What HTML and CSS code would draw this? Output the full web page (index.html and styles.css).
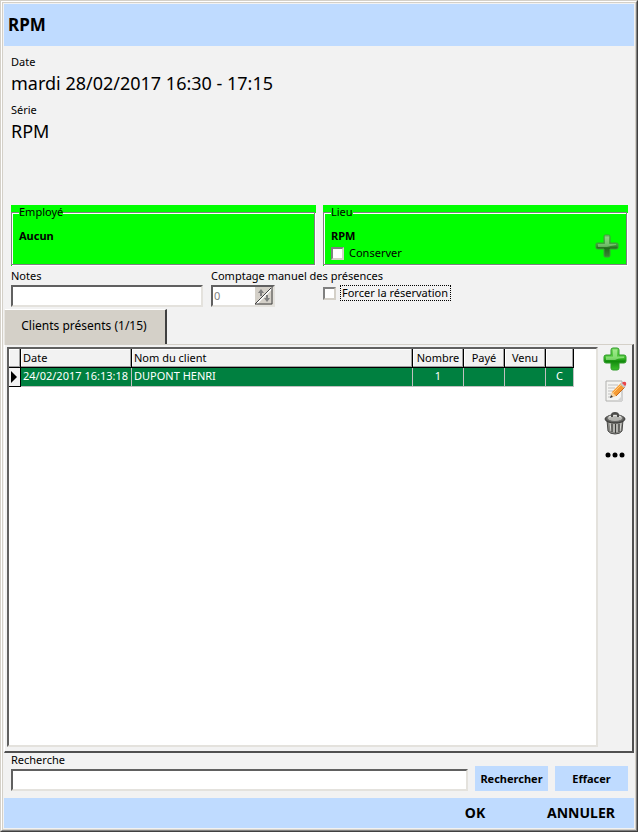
FILE: index.html
```html
<!DOCTYPE html>
<html lang="fr">
<head>
    <meta charset="UTF-8">
    <meta name="viewport" content="width=device-width, initial-scale=1.0">
    <title>RPM</title>
    <link rel="stylesheet" href="styles.css">
</head>
<body>
    <div class="window">
        <div class="window_inner">
            <h1 class="title">RPM</h1>

            <div class="infos">
                <div class="info_label">Date</div>
                <div class="info_value">mardi 28/02/2017 16:30 - 17:15</div>
                <div class="info_label">Série</div>
                <div class="info_value">RPM</div>
            </div>

            <div class="groups">
                <div class="group">
                    <fieldset class="group_box">
                        <legend>Employé</legend>
                        <div class="group_value">Aucun</div>
                    </fieldset>
                </div>
                <div class="group">
                    <fieldset class="group_box">
                        <legend>Lieu</legend>
                        <div class="group_value">RPM</div>
                        <label class="check"><input type="checkbox" name="conserver"><span>Conserver</span></label>
                        <button class="icon_button group_add" type="button" aria-label="Ajouter un lieu">
                            <svg width="24" height="24" viewBox="0 0 24 24">
                                <defs>
                                    <linearGradient id="olive" x1="0" y1="0" x2="0" y2="1">
                                        <stop offset="0" stop-color="#7fc878"/>
                                        <stop offset="0.45" stop-color="#45a040"/>
                                        <stop offset="0.6" stop-color="#1f6a1a"/>
                                        <stop offset="1" stop-color="#3a8a34"/>
                                    </linearGradient>
                                </defs>
                                <path d="M10 1H14Q15 1 15 3V9H21Q23 9 23 10V14Q23 15 21 15H15V21Q15 23 14 23H10Q9 23 9 21V15H3Q1 15 1 14V10Q1 9 3 9H9V3Q9 1 10 1Z" fill="url(#olive)" stroke="#3f9a3a"/>
                                <path d="M10 3H14V10H21V11Q15 12 12 13H3V10H10Z" fill="#b4f0a8" opacity="0.4"/>
                            </svg>
                        </button>
                    </fieldset>
                </div>
            </div>

            <div class="fields">
                <div class="fields_left">
                    <div class="notes">
                        <label class="field_label" for="notes">Notes</label>
                        <input class="text_input" type="text" id="notes">
                    </div>
                    <div class="count">
                        <label class="field_label" for="count">Comptage manuel des présences</label>
                        <div class="spinner">
                            <input type="number" id="count" value="0" disabled>
                            <button type="button" disabled aria-label="Modifier le comptage">
                                <svg width="18" height="18" viewBox="0 0 18 18">
                                    <path d="M1 17 17 1" stroke="#fff" stroke-width="2"/>
                                    <path d="M0 17 16 1" stroke="#404040"/>
                                    <path d="M17 0V17H0" fill="none" stroke="#404040"/>
                                    <path d="M6 2 9 6H7V9H5V6H3ZM12 15 9 11H11V8H13V11H15Z" fill="#808080"/>
                                </svg>
                            </button>
                        </div>
                    </div>
                </div>
                <div class="fields_right">
                    <label class="check check_focus"><input type="checkbox" name="forcer"><span>Forcer la réservation</span></label>
                </div>
            </div>

            <div class="tabs">
                <button class="tab" type="button">Clients présents (1/15)</button>
            </div>
            <div class="panel">
                <div class="list">
                    <table class="clients">
                        <colgroup>
                            <col class="col_mark">
                            <col class="col_date">
                            <col>
                            <col class="col_number">
                            <col class="col_flag">
                            <col class="col_flag">
                            <col class="col_type">
                        </colgroup>
                        <thead>
                            <tr>
                                <th></th>
                                <th>Date</th>
                                <th>Nom du client</th>
                                <th class="center">Nombre</th>
                                <th class="center">Payé</th>
                                <th class="center">Venu</th>
                                <th></th>
                            </tr>
                        </thead>
                        <tbody>
                            <tr>
                                <td class="mark"><svg width="6" height="12" viewBox="0 0 6 12"><path d="M0 0 6 6 0 12Z"/></svg></td>
                                <td>24/02/2017 16:13:18</td>
                                <td>DUPONT HENRI</td>
                                <td class="center">1</td>
                                <td></td>
                                <td></td>
                                <td class="center">C</td>
                            </tr>
                        </tbody>
                    </table>
                </div>
                <div class="tools">
                    <button class="icon_button" type="button" aria-label="Ajouter">
                        <svg width="24" height="24" viewBox="0 0 24 24">
                            <defs>
                                <linearGradient id="green" x1="0" y1="0" x2="0" y2="1">
                                    <stop offset="0" stop-color="#7ddc68"/>
                                    <stop offset="0.45" stop-color="#3fc02c"/>
                                    <stop offset="0.6" stop-color="#128a0c"/>
                                    <stop offset="1" stop-color="#3cc02c"/>
                                </linearGradient>
                            </defs>
                            <path d="M10 1H14Q16 1 16 3V8H21Q23 8 23 10V14Q23 16 21 16H16V21Q16 23 14 23H10Q8 23 8 21V16H3Q1 16 1 14V10Q1 8 3 8H8V3Q8 1 10 1Z" fill="url(#green)" stroke="#2f9a28"/>
                            <path d="M10 2.500H14V9.500H21V11Q15 11 12 13H3V9.500H10Z" fill="#d4ffc4" opacity="0.450"/>
                        </svg>
                    </button>
                    <button class="icon_button" type="button" aria-label="Modifier">
                        <svg width="24" height="24" viewBox="0 0 24 24">
                            <path d="M3 2H19V22H3Z" fill="#f4f4f2" stroke="#b0b0ae"/>
                            <path d="M14 22 19 17V22Z" fill="#d4d4d4"/>
                            <path d="M5 6H15M5 9H12M5 12H10M5 15H8M5 18H8" stroke="#c0c0c0"/>
                            <path d="M8 18 9 13 18 4 22 8 13 17Z" fill="#f59a32"/>
                            <path d="M13 17 22 8" stroke="#c4681c"/>
                            <path d="M10 14 19 5" stroke="#ffc878"/>
                            <path d="M8 18 9 13 13 17Z" fill="#f2d3a5"/>
                            <path d="M7 19 8 16 10 18Z" fill="#333"/>
                            <path d="M17 5 19 3 23 7 21 9Z" fill="#c8c8c8"/>
                            <path d="M19 4 20 3Q24 2 23 6L22 7Z" fill="#e9444a"/>
                        </svg>
                    </button>
                    <button class="icon_button" type="button" aria-label="Supprimer">
                        <svg width="24" height="24" viewBox="0 0 24 24">
                            <path d="M4 9H20L19 20Q17 23 12 23T5 20Z" fill="#8a8a86" stroke="#4a4a48"/>
                            <path d="M7 12 8 20M11 13V21M14 13V21M18 12 17 20" stroke="#dcdcd8"/>
                            <path d="M9 13V21M12.500 13V22M16 13V21" stroke="#3c3c3a"/>
                            <ellipse cx="12" cy="8" rx="10" ry="4" fill="#5a5a58" stroke="#3a3a38"/>
                            <ellipse cx="12" cy="7" rx="8" ry="3.500" fill="#b4b4b0" stroke="#686866"/>
                            <path d="M6 6Q12 3 18 6" fill="none" stroke="#ececea"/>
                            <path d="M9 6V4Q9 2 12 2T15 4V6" fill="none" stroke="#4a4a48" stroke-width="2"/>
                        </svg>
                    </button>
                    <button class="icon_button" type="button" aria-label="Plus">
                        <svg width="24" height="24" viewBox="0 0 24 24">
                            <circle cx="5" cy="12" r="2.500"/>
                            <circle cx="12" cy="12" r="2.500"/>
                            <circle cx="19" cy="12" r="2.500"/>
                        </svg>
                    </button>
                </div>
            </div>

            <form class="search">
                <div class="search_field">
                    <label class="field_label" for="search">Recherche</label>
                    <input class="text_input" type="text" id="search">
                </div>
                <button class="search_button" type="button">Rechercher</button>
                <button class="search_button" type="reset">Effacer</button>
            </form>

            <div class="footer">
                <button class="footer_button" type="button">OK</button>
                <button class="footer_button" type="button">ANNULER</button>
            </div>
        </div>
    </div>
</body>
</html>
```

FILE: styles.css
```css
*{
    box-sizing: border-box;
}
body{
    margin: 0px;
    font-family: "Noto Sans", "Open Sans", sans-serif;
    font-size: 11px;
    line-height: 14px;
    color: black;
}
button, input{
    font: inherit;
    color: inherit;
    margin: 0px;
}
.window{
    display: flex;
    min-height: 100vh;
    background-color: #f2f2f2;
    border: 1px solid;
    border-color: #d4d0c8 #404040 #404040 #d4d0c8;
}
.window_inner{
    display: flex;
    flex-direction: column;
    flex: 1;
    min-width: 0px;
    border: 1px solid;
    border-color: white #808080 #808080 white;
    outline: 1px solid #d4d0c8;
    outline-offset: -2px;
    padding: 2px;
}
.title{
    margin: 0px;
    height: 42px;
    padding-left: 4px;
    background-color: #bfdbff;
    font-size: 17px;
    line-height: 42px;
    font-weight: 700;
}
.infos{
    height: 159px;
    padding: 9px 7px;
}
.info_label{
    height: 16px;
}
.info_value{
    height: 32px;
    font-size: 18px;
    line-height: 24px;
}

/* green boxes */
.groups{
    display: flex;
    gap: 7px;
    padding: 0px 6px 0px 7px;
}
.group{
    flex: 1;
    height: 61px;
    background-color: #00ff00;
}
.group_box{
    position: relative;
    height: 60px;
    margin: 0px 1px 0px 0px;
    padding: 10px 7px 0px;
    border: 1px solid #808080;
    box-shadow: inset 1px 1px white, 1px 1px white;
}
.group_box legend{
    padding: 0px;
    background-color: #00ff00;
}
.group_value{
    font-weight: 700;
    margin-bottom: 3px;
}
.group_add{
    position: absolute;
    right: 7px;
    bottom: 6px;
}
.icon_button{
    display: block;
    width: 24px;
    height: 24px;
    padding: 0px;
    border: none;
    background: none;
    cursor: pointer;
}
.icon_button svg{
    display: block;
}
.check{
    display: flex;
    align-items: center;
    gap: 5px;
}
.check input{
    appearance: none;
    width: 13px;
    height: 13px;
    background-color: white;
    border: 2px solid;
    border-color: #808080 #d4d0c8 #d4d0c8 #808080;
}
.check_focus{
    gap: 4px;
}
.check_focus span{
    padding: 0px 2px 0px 1px;
    border: 1px dotted black;
}

.fields{
    display: flex;
    gap: 7px;
    padding: 3px 6px 0px 7px;
}
.fields_left, .fields_right{
    flex: 1;
    min-width: 0px;
}
.fields_left{
    display: flex;
    gap: 8px;
}
.fields_right{
    padding-top: 16px;
}
.notes{
    flex: 1;
}
.count{
    width: 105px;
}
.field_label{
    display: block;
    height: 16px;
    white-space: nowrap;
}
.text_input, .spinner{
    display: block;
    width: 100%;
    height: 22px;
    padding: 0px 2px;
    background-color: white;
    border: 2px solid;
    border-color: #606060 #e4e2dd #e4e2dd #606060;
    outline: none;
}
.spinner{
    display: flex;
    width: 64px;
    padding: 0px;
}
.spinner input{
    flex: 1;
    min-width: 0px;
    padding: 0px 1px;
    border: none;
    background: none;
    color: #808080;
    appearance: textfield;
}
.spinner button{
    width: 18px;
    padding: 0px;
    border: none;
    background-color: #d4d0c8;
}
.spinner svg{
    display: block;
}

.tabs{
    display: flex;
    height: 35px;
    margin-top: 2px;
}
.tab{
    width: 163px;
    padding: 0px 2px 2px 0px;
    border: 1px solid;
    border-width: 1px 2px 0px 1px;
    border-color: white #404040 white #e8e6e1;
    background-color: #d4d0c8;
    font-size: 12px;
}
.panel{
    display: flex;
    flex: 1;
    border: 1px solid;
    border-width: 1px 2px 2px 1px;
    border-color: #d4d0c8 #505050 #505050 white;
    padding: 2px 5px 4px 2px;
}
.list{
    flex: 1;
    background-color: white;
    border: 2px solid;
    border-color: #606060 #e4e2dd #e4e2dd #606060;
}
.tools{
    display: flex;
    flex-direction: column;
    gap: 8px;
    margin-left: 5px;
}
.clients{
    width: calc(100% - 22px);
    table-layout: fixed;
    border-collapse: separate;
    border-spacing: 0px;
}
.col_mark{
    width: 12px;
}
.col_date{
    width: 111px;
}
.col_number{
    width: 51px;
}
.col_flag{
    width: 41px;
}
.col_type{
    width: 28px;
}
.clients th, .clients td{
    height: 19px;
    padding: 0px 2px;
    text-align: left;
    white-space: nowrap;
}
.clients th{
    background-color: #f2f2f2;
    font-weight: 400;
    border-right: 1px solid black;
    border-bottom: 1px solid black;
    box-shadow: inset -1px -1px #a0a0a0, inset 1px 1px white;
}
.clients td{
    padding-bottom: 2px;
    background-color: #008040;
    color: white;
    border-right: 1px solid #c0c0c0;
    border-bottom: 1px solid #c0c0c0;
}
.clients .mark{
    padding-bottom: 0px;
    background-color: #f2f2f2;
    border-color: black;
}
.mark svg{
    display: block;
}
.clients .center{
    text-align: center;
}

.search{
    display: flex;
    align-items: flex-end;
    gap: 7px;
    padding: 0px 6px 7px 7px;
}
.search_field{
    flex: 1;
}
.search_button{
    width: 73px;
    height: 25px;
    padding: 0px;
    border: none;
    background-color: #bfdbff;
    font-weight: 700;
    cursor: pointer;
}
.footer{
    display: flex;
    justify-content: flex-end;
    height: 30px;
    background-color: #bfdbff;
}
.footer_button{
    width: 106px;
    padding: 0px;
    border: none;
    background: none;
    font-size: 14px;
    font-weight: 700;
    cursor: pointer;
}
```
